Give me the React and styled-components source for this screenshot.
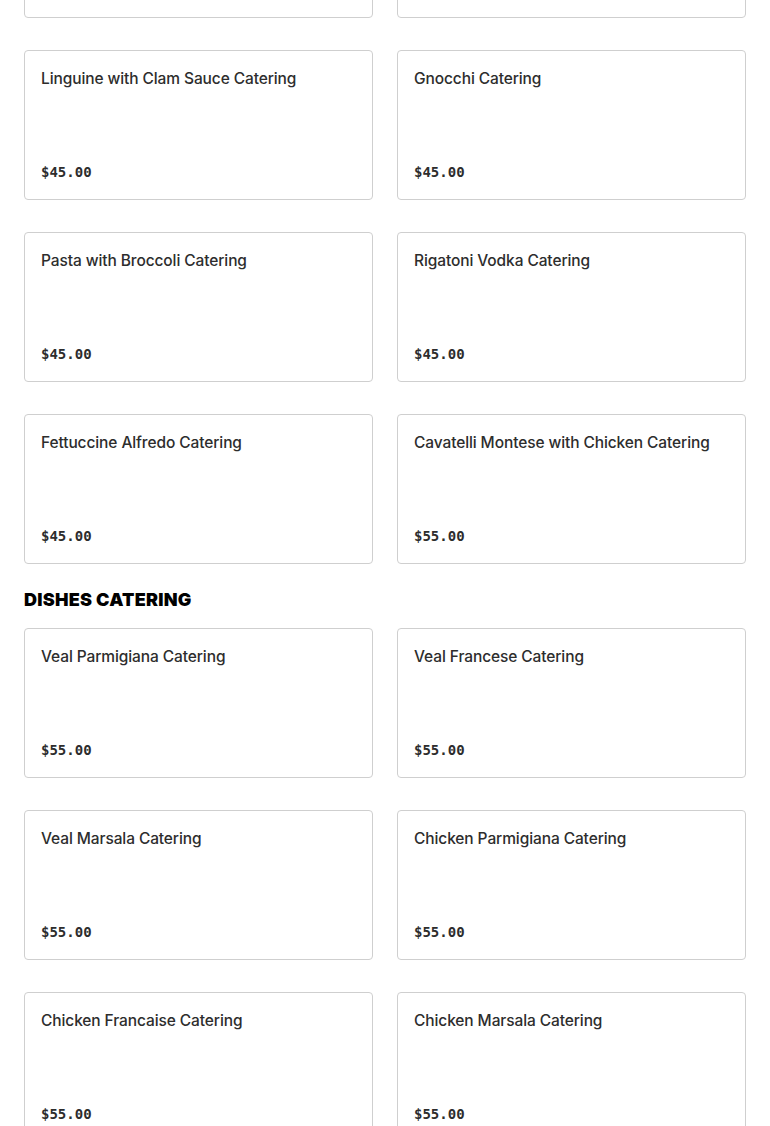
import styled, { createGlobalStyle } from "styled-components";

const GlobalStyle = createGlobalStyle`
    body {
        margin: 0;
        background: #fff;
        font-family: "Inter", "Liberation Sans", sans-serif;
        color: #2d2d2d;
    }
`

const sections = [
    {
        title: null,
        items: [
            { name: "Penne Catering", price: "$45.00" },
            { name: "Ziti Catering", price: "$45.00" },
            { name: "Linguine with Clam Sauce Catering", price: "$45.00" },
            { name: "Gnocchi Catering", price: "$45.00" },
            { name: "Pasta with Broccoli Catering", price: "$45.00" },
            { name: "Rigatoni Vodka Catering", price: "$45.00" },
            { name: "Fettuccine Alfredo Catering", price: "$45.00" },
            { name: "Cavatelli Montese with Chicken Catering", price: "$55.00" },
        ],
    },
    {
        title: "DISHES CATERING",
        items: [
            { name: "Veal Parmigiana Catering", price: "$55.00" },
            { name: "Veal Francese Catering", price: "$55.00" },
            { name: "Veal Marsala Catering", price: "$55.00" },
            { name: "Chicken Parmigiana Catering", price: "$55.00" },
            { name: "Chicken Francaise Catering", price: "$55.00" },
            { name: "Chicken Marsala Catering", price: "$55.00" },
        ],
    },
];

export default function App() {
    return (
        <>
            <GlobalStyle />
            <Page>
                {sections.map((section, i) => (
                    <Section key={i}>
                        {section.title && <SectionTitle>{section.title}</SectionTitle>}
                        <Grid>
                            {section.items.map((item) => (
                                <Card key={item.name}>
                                    <ItemName>{item.name}</ItemName>
                                    <Price>{item.price}</Price>
                                </Card>
                            ))}
                        </Grid>
                    </Section>
                ))}
            </Page>
        </>
    )
}

// page is shown scrolled: first row of cards is mostly above the fold
const Page = styled.div`
    padding: 0 24px;
    margin-top: -132px;
`

const Section = styled.section`
    display: flex;
    flex-direction: column;
`

const SectionTitle = styled.h2`
    margin: 0;
    padding: 24px 0 17px;
    font-family: "Inter", "Liberation Sans", sans-serif;
    font-weight: 900;
    font-size: 18px;
    line-height: 23px;
    letter-spacing: 0.25px;
    color: #000;
`

const Grid = styled.div`
    display: grid;
    grid-template-columns: 1fr 1fr;
    column-gap: 24px;
    row-gap: 32px;
`

const Card = styled.div`
    height: 150px;
    box-sizing: border-box;
    border: 1px solid #cfcfcf;
    border-radius: 4px;
    padding: 16px 16px 17px;
    display: flex;
    flex-direction: column;
    justify-content: space-between;
`

const ItemName = styled.div`
    font-size: 15.5px;
    font-weight: 500;
    line-height: 24px;
    color: #2d2d2d;
    letter-spacing: -0.1px;
`

const Price = styled.div`
    font-family: "DejaVu Sans Mono", "Liberation Mono", monospace;
    font-size: 14px;
    font-weight: 600;
    line-height: 20px;
    color: #2d2d2d;
`
